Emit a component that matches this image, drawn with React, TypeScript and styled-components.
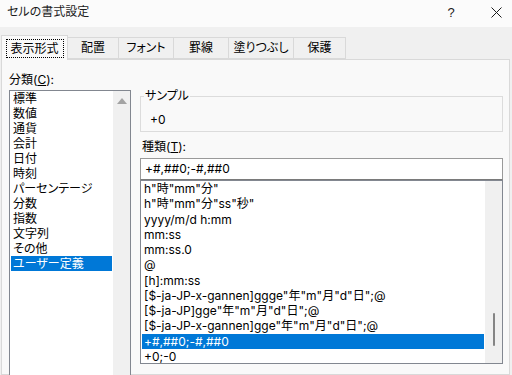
import React from "react";
import styled, { createGlobalStyle } from "styled-components";

const Global = createGlobalStyle`
  html, body { margin: 0; padding: 0; }
  body {
    background: #f0f0f0;
    color: #000;
    overflow: hidden;
  }
`;

const Window = styled.div`
  width: 512px;
  height: 375px;
  overflow: hidden;
  display: flex;
  flex-direction: column;
  background: #f0f0f0;
  font-family: "Inter", "Noto Sans CJK JP", sans-serif;
  font-feature-settings: "palt";
  font-size: 12px;
`;

const TitleBar = styled.div`
  height: 27px;
  flex: none;
  display: flex;
  align-items: center;
  padding: 0 6px 3px 7px;
  box-sizing: border-box;
  background: #fbfbfb;
  color: #1b1b1b;
`;

const Title = styled.div`
  flex: 1;
  font-size: 12px;
  line-height: 16px;
`;

const TitleButton = styled.div<{ $gap?: number }>`
  width: 20px;
  height: 16px;
  display: flex;
  align-items: center;
  justify-content: center;
  margin-left: ${(p) => p.$gap ?? 0}px;
  font-family: "Liberation Sans", sans-serif;
  font-size: 13px;
  color: #1b1b1b;
`;

const TabStrip = styled.div`
  height: 32px;
  flex: none;
  display: flex;
  align-items: flex-end;
  padding-left: 1px;
  box-sizing: border-box;
  position: relative;
  z-index: 1;
`;

const Tab = styled.div<{ $w: number; $active?: boolean }>`
  width: ${(p) => p.$w}px;
  height: ${(p) => (p.$active ? 25 : 22)}px;
  margin-bottom: ${(p) => (p.$active ? -1 : 0)}px;
  margin-left: -1px;
  box-sizing: border-box;
  border: 1px solid #d9d9d9;
  border-bottom: ${(p) => (p.$active ? "none" : "1px solid #d9d9d9")};
  background: ${(p) => (p.$active ? "#f9f9f9" : "#f0f0f0")};
  display: flex;
  align-items: ${(p) => (p.$active ? "flex-start" : "center")};
  justify-content: center;
  padding-top: ${(p) => (p.$active ? 3 : 0)}px;
  line-height: 16px;
  &:first-child { margin-left: 0; }
`;

const Focus = styled.span`
  display: block;
  width: 58px;
  height: 19px;
  box-sizing: border-box;
  border: 1px dotted #000;
  text-align: center;
  line-height: 17px;
`;

const Panel = styled.div`
  flex: 1;
  margin: 0 2px 0 1px;
  background: #f9f9f9;
  border: 1px solid #d9d9d9;
  display: grid;
  grid-template-columns: 122px 363px;
  column-gap: 9px;
  padding: 12px 6px 0 7px;
  min-height: 0;
`;

const Column = styled.div<{ $top?: number }>`
  display: flex;
  flex-direction: column;
  padding-top: ${(p) => p.$top ?? 0}px;
  min-height: 0;
`;

const Label = styled.div<{ $indent?: number; $mt?: number }>`
  line-height: 16px;
  padding-left: ${(p) => p.$indent ?? 0}px;
  margin-top: ${(p) => p.$mt ?? 0}px;
  margin-bottom: 2px;
`;

const Key = styled.span`
  text-decoration: underline;
  text-underline-offset: 1px;
`;

const ListBox = styled.div<{ $h: number }>`
  height: ${(p) => p.$h}px;
  flex: none;
  box-sizing: border-box;
  border: 1px solid #828790;
  background: #fff;
  display: flex;
  overflow: hidden;
`;

const Items = styled.div`
  flex: 1;
  padding: 0 1px;
  min-width: 0;
`;

const Item = styled.div<{ $h: number; $sel?: boolean }>`
  height: ${(p) => p.$h}px;
  line-height: ${(p) => p.$h}px;
  padding-left: 2px;
  white-space: nowrap;
  overflow: hidden;
  background: ${(p) => (p.$sel ? "#0078d7" : "transparent")};
  color: ${(p) => (p.$sel ? "#fff" : "#000")};
`;

const ScrollBar = styled.div`
  width: 17px;
  flex: none;
  background: #f0f0f0;
  position: relative;
`;

const UpArrow = styled.div`
  margin: 7px auto 0;
  width: 0;
  height: 0;
  border-left: 5px solid transparent;
  border-right: 5px solid transparent;
  border-bottom: 6px solid #a3a3a3;
`;

const Thumb = styled.div`
  position: absolute;
  left: 8px;
  top: 132px;
  width: 2px;
  height: 33px;
  border-radius: 1px;
  background: #858585;
`;

const Group = styled.fieldset`
  margin: 0;
  height: 44px;
  box-sizing: border-box;
  border: 1px solid #dcdcdc;
  padding: 0 0 3px 9px;
  min-width: 0;
`;

const Legend = styled.legend`
  padding: 0 1px;
  margin-left: -6px;
  line-height: 16px;
`;

const Sample = styled.div`
  margin-top: 8px;
  line-height: 16px;
`;

const Input = styled.div`
  height: 22px;
  flex: none;
  box-sizing: border-box;
  border: 1px solid #9a9a9a;
  border-bottom-color: #7a7a7a;
  background: #fff;
  padding-left: 4px;
  line-height: 20px;
  margin-top: 1px;
`;

const categories = [
  "標準",
  "数値",
  "通貨",
  "会計",
  "日付",
  "時刻",
  "パーセンテージ",
  "分数",
  "指数",
  "文字列",
  "その他",
  "ユーザー定義",
];

const formats = [
  'h"時"mm"分"',
  'h"時"mm"分"ss"秒"',
  "yyyy/m/d h:mm",
  "mm:ss",
  "mm:ss.0",
  "@",
  "[h]:mm:ss",
  '[$-ja-JP-x-gannen]ggge"年"m"月"d"日";@',
  '[$-ja-JP]gge"年"m"月"d"日";@',
  '[$-ja-JP-x-gannen]gge"年"m"月"d"日";@',
  "+#,##0;-#,##0",
  "+0;-0",
];

const CloseIcon = () => (
  <svg width="11" height="11" viewBox="0 0 11 11">
    <path d="M0.5 0.5 L10.5 10.5 M10.5 0.5 L0.5 10.5" stroke="#1b1b1b" strokeWidth="1" fill="none" />
  </svg>
);

const tabs = [
  { label: "表示形式", w: 67 },
  { label: "配置", w: 52 },
  { label: "フォント", w: 56 },
  { label: "罫線", w: 56 },
  { label: "塗りつぶし", w: 66 },
  { label: "保護", w: 53 },
];

export default function App() {
  return (
    <>
      <Global />
      <Window>
        <TitleBar>
          <Title>セルの書式設定</Title>
          <TitleButton>?</TitleButton>
          <TitleButton $gap={25}>
            <CloseIcon />
          </TitleButton>
        </TitleBar>
        <TabStrip>
          {tabs.map((t, i) => (
            <Tab key={t.label} $w={t.w} $active={i === 0}>
              {i === 0 ? <Focus>{t.label}</Focus> : t.label}
            </Tab>
          ))}
        </TabStrip>
        <Panel>
          <Column>
            <Label>
              分類(<Key>C</Key>):
            </Label>
            <ListBox $h={300}>
              <Items>
                {categories.map((c, i) => (
                  <Item key={c} $h={15} $sel={i === categories.length - 1}>
                    {c}
                  </Item>
                ))}
              </Items>
              <ScrollBar>
                <UpArrow />
              </ScrollBar>
            </ListBox>
          </Column>
          <Column $top={16}>
            <Group>
              <Legend>サンプル</Legend>
              <Sample>+0</Sample>
            </Group>
            <Label $indent={2} $mt={7}>
              種類(<Key>T</Key>):
            </Label>
            <Input>+#,##0;-#,##0</Input>
            <ListBox $h={184}>
              <Items>
                {formats.map((f, i) => (
                  <Item key={f} $h={15.27} $sel={i === 10}>
                    {f}
                  </Item>
                ))}
              </Items>
              <ScrollBar>
                <Thumb />
              </ScrollBar>
            </ListBox>
          </Column>
        </Panel>
      </Window>
    </>
  );
}
